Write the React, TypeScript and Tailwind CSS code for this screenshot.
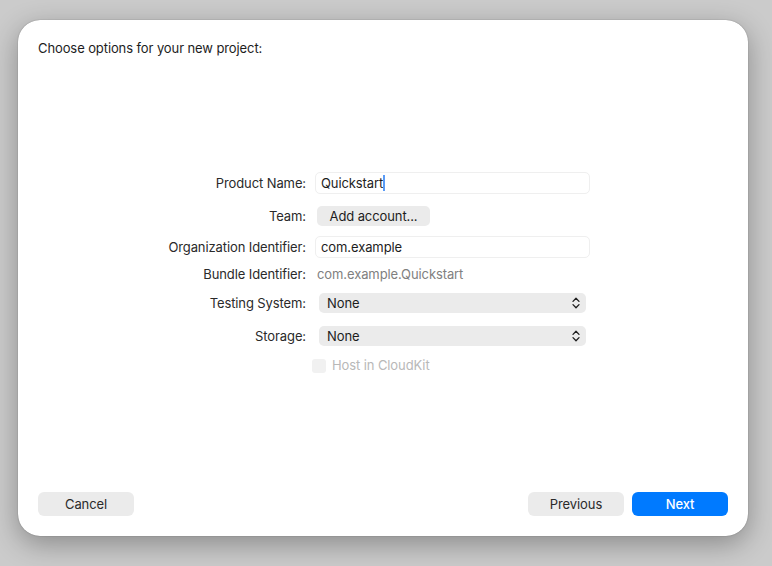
const font = "[font-family:Inter,'Liberation_Sans',sans-serif]";

function Chevrons() {
  return (
    <svg width="8" height="12" viewBox="0 0 8 12" fill="none" stroke="#1d1d1d" strokeWidth="1.3" strokeLinecap="round" strokeLinejoin="round">
      <path d="M1 4.4 4 1.3 7 4.4" />
      <path d="M1 7.6 4 10.7 7 7.6" />
    </svg>
  );
}

function Row({ label, children, className }: { label: string; children: React.ReactNode; className: string }) {
  return (
    <div className={`flex items-center ${className}`}>
      <div className="w-[297px] shrink-0 pr-[9px] pt-[2px] text-right text-[#2a2a2a]">{label}</div>
      {children}
    </div>
  );
}

function SelectBox() {
  return (
    <div className="ml-[4px] flex h-[20px] w-[267px] items-center justify-between rounded-[5px] bg-[#ebebeb] pl-[8px] pr-[6px] text-[#1d1d1d]">
      <span className="pt-[2px]">None</span>
      <Chevrons />
    </div>
  );
}

export default function App() {
  return (
    <div className={`h-[566px] w-[772px] overflow-hidden bg-[#cbcbcb] pl-[18px] pt-[20px] text-[13px] tracking-[-0.1px] ${font}`}>
      <div className="flex h-[516px] w-[730px] flex-col rounded-[22px] bg-white px-[20px] pt-[20px] pb-[20px] shadow-[0_0_1px_rgba(0,0,0,0.5),0_8px_28px_rgba(0,0,0,0.32)]">
        <div className="h-[16px] leading-[16px] text-[#1d1d1d]">Choose options for your new project:</div>
        <div className="flex-1 -ml-[20px] pt-[116px]">
          <Row label="Product Name:" className="h-[22px]">
            <div className="flex h-[22px] w-[275px] items-center rounded-[5px] border border-[#efefef] pl-[5px] text-[#1d1d1d]">
              <span className="pt-[2px]">Quickstart</span>
              <span className="h-[16px] w-[2px] bg-[#5a9bf6]" />
            </div>
          </Row>
          <Row label="Team:" className="mt-[12px] h-[20px]">
            <div className="ml-[2px] flex h-[20px] w-[113px] items-center justify-center rounded-[5px] bg-[#ebebeb] pt-[2px] text-[#1d1d1d]">Add account...</div>
          </Row>
          <Row label="Organization Identifier:" className="mt-[10px] h-[22px]">
            <div className="flex h-[22px] w-[275px] items-center rounded-[5px] border border-[#efefef] pl-[5px] pt-[2px] text-[#1d1d1d]">com.example</div>
          </Row>
          <Row label="Bundle Identifier:" className="mt-[8px] h-[16px]">
            <div className="ml-[2px] pt-[2px] text-[#808080]">com.example.Quickstart</div>
          </Row>
          <Row label="Testing System:" className="mt-[11px] h-[20px]">
            <SelectBox />
          </Row>
          <Row label="Storage:" className="mt-[13px] h-[20px]">
            <SelectBox />
          </Row>
          <div className="mt-[12px] flex h-[16px] items-center pl-[294px]">
            <span className="h-[14px] w-[14px] rounded-[3px] bg-[#f1f1f1]" />
            <span className="ml-[6px] text-[#b8b8b8]">Host in CloudKit</span>
          </div>
        </div>
        <div className="flex items-center justify-between">
          <div className="flex h-[24px] w-[96px] items-center justify-center rounded-[6px] bg-[#ebebeb] pt-[2px] text-[#2a2a2a]">Cancel</div>
          <div className="flex gap-[8px]">
            <div className="flex h-[24px] w-[96px] items-center justify-center rounded-[6px] bg-[#ebebeb] pt-[2px] text-[#2a2a2a]">Previous</div>
            <div className="flex h-[24px] w-[96px] items-center justify-center rounded-[6px] bg-[#007aff] pt-[2px] font-medium text-white">Next</div>
          </div>
        </div>
      </div>
    </div>
  );
}
